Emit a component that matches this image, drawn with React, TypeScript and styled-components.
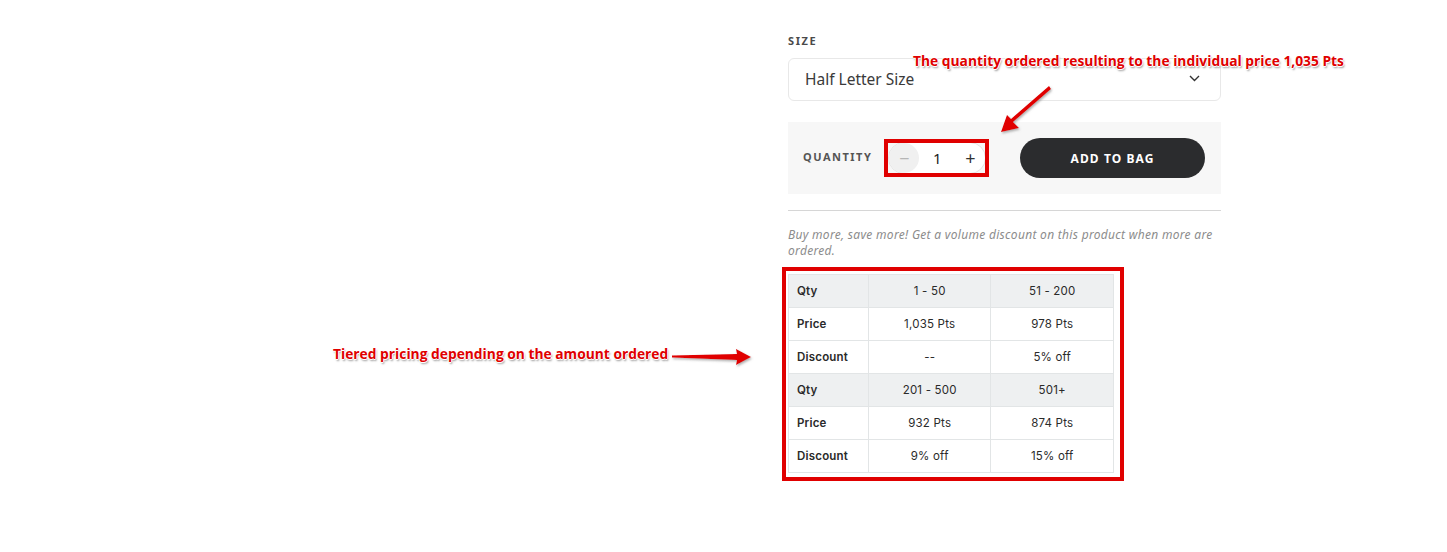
import React from "react";
import styled, { createGlobalStyle } from "styled-components";

const GlobalStyle = createGlobalStyle`
    html, body {
        margin: 0;
        padding: 0;
        background: #fff;
    }

    body {
        font-family: "Noto Sans", "Open Sans", sans-serif;
        color: #333;
    }
`;

const Page = styled.div`
    display: grid;
    grid-template-columns: 788px 433px;
    min-height: 552px;
    position: relative;
`;

const Gallery = styled.div``;

const ProductColumn = styled.div`
    display: flex;
    flex-direction: column;
    padding-top: 34px;
`;

const FieldLabel = styled.div`
    color: #4a4a4a;
    font-size: 11px;
    font-weight: 700;
    letter-spacing: 1.6px;
    line-height: 14px;
    text-transform: uppercase;
`;

const SelectBox = styled.div`
    align-items: center;
    border: 1px solid #e8e8e8;
    border-radius: 6px;
    box-sizing: border-box;
    color: #3a3a3a;
    display: flex;
    font-size: 15.5px;
    height: 43px;
    justify-content: space-between;
    margin-top: 10px;
    padding: 0 20px 2px 16px;
`;

const QuantityPanel = styled.div`
    align-items: center;
    background-color: #f7f7f7;
    box-sizing: border-box;
    display: flex;
    height: 72px;
    margin-top: 21px;
    padding: 0 16px 0 15px;
`;

const QuantityLabel = styled(FieldLabel)`
    color: #555;
    letter-spacing: 1.5px;
    margin-top: -2px;
`;

const Stepper = styled.div`
    align-items: center;
    background: #fff;
    border: 1px solid #e3e3e3;
    border-radius: 16px;
    box-sizing: border-box;
    display: flex;
    height: 32px;
    margin-left: 16px;
    position: relative;
    width: 98px;
`;

const StepButton = styled.div<{ $muted?: boolean }>`
    align-items: center;
    background: ${(p) => (p.$muted ? "#f0f0f0" : "transparent")};
    border-radius: 50%;
    color: ${(p) => (p.$muted ? "#b5b5b5" : "#333")};
    display: flex;
    font-size: 18px;
    height: 30px;
    justify-content: center;
    width: 30px;
`;

const StepValue = styled.div`
    color: #222;
    flex: 1;
    font-size: 15px;
    text-align: center;
`;

const Highlight = styled.div<{ $t: number; $r: number; $b: number; $l: number }>`
    border: 4px solid #e00000;
    inset: ${(p) => `-${p.$t}px -${p.$r}px -${p.$b}px -${p.$l}px`};
    pointer-events: none;
    position: absolute;
`;

const AddButton = styled.button`
    background-color: #2b2c2e;
    border: none;
    border-radius: 20px;
    color: #fff;
    font-family: "Noto Sans", sans-serif;
    font-size: 12px;
    font-weight: 700;
    height: 40px;
    letter-spacing: 1.1px;
    margin-left: auto;
    width: 185px;
`;

const Divider = styled.hr`
    border: none;
    border-top: 1px solid #d6d6d6;
    margin: 16px 0 0;
`;

const Note = styled.p`
    color: #8c8c8c;
    font-size: 12px;
    font-style: italic;
    letter-spacing: 0.3px;
    line-height: 16px;
    margin: 16px 0 0;
    max-width: 428px;
`;

const TableWrap = styled.div`
    align-self: flex-start;
    margin-top: 15px;
    position: relative;
`;

const PriceTable = styled.table`
    border-collapse: collapse;
    font-family: "Inter", "Liberation Sans", sans-serif;
    font-size: 11.5px;
    width: 326px;
`;

const Row = styled.tr<{ $head?: boolean }>`
    background: ${(p) => (p.$head ? "#eef0f1" : "#fff")};
    height: 33px;
`;

const Cell = styled.td<{ $label?: boolean }>`
    border: 1px solid #e2e5e6;
    box-sizing: border-box;
    color: #2a2a2a;
    font-weight: ${(p) => (p.$label ? 600 : 400)};
    letter-spacing: 0.2px;
    padding: 0 8px;
    text-align: ${(p) => (p.$label ? "left" : "center")};
    width: ${(p) => (p.$label ? "80px" : "123px")};
`;

const Callout = styled.div<{ $x: number; $y: number }>`
    color: #e00000;
    font-family: "Open Sans", "Noto Sans", sans-serif;
    font-size: 13.8px;
    font-weight: 700;
    left: ${(p) => p.$x}px;
    position: absolute;
    text-shadow: 1px 0 0 #fff, -1px 0 0 #fff, 0 1px 0 #fff, 0 -1px 0 #fff, 1px 2px 2px #9a9a9a;
    top: ${(p) => p.$y}px;
    white-space: nowrap;
`;

const ArrowLayer = styled.svg`
    left: 0;
    overflow: visible;
    pointer-events: none;
    position: absolute;
    top: 0;
`;

const Chevron = () => (
    <svg width="11" height="7" viewBox="0 0 11 7">
        <path d="M1 1l4.5 4.5L10 1" fill="none" stroke="#333" strokeWidth="1.4" />
    </svg>
);

const tiers = [
    [
        ["Qty", "1 - 50", "51 - 200"],
        ["Price", "1,035 Pts", "978 Pts"],
        ["Discount", "--", "5% off"],
    ],
    [
        ["Qty", "201 - 500", "501+"],
        ["Price", "932 Pts", "874 Pts"],
        ["Discount", "9% off", "15% off"],
    ],
];

const App: React.FC = () => {
    const rows = tiers.flat();

    return (
        <>
            <GlobalStyle />
            <Page>
                <Gallery />
                <ProductColumn>
                    <FieldLabel>Size</FieldLabel>
                    <SelectBox>
                        <span>Half Letter Size</span>
                        <Chevron />
                    </SelectBox>

                    <QuantityPanel>
                        <QuantityLabel>Quantity</QuantityLabel>
                        <Stepper>
                            <StepButton $muted>−</StepButton>
                            <StepValue>1</StepValue>
                            <StepButton>+</StepButton>
                            <Highlight $t={4} $r={4} $b={4} $l={5} />
                        </Stepper>
                        <AddButton>ADD TO BAG</AddButton>
                    </QuantityPanel>

                    <Divider />
                    <Note>
                        Buy more, save more! Get a volume discount on this product when more are ordered.
                    </Note>

                    <TableWrap>
                        <PriceTable>
                            <tbody>
                                {rows.map((row, i) => (
                                    <Row key={i} $head={row[0] === "Qty"}>
                                        <Cell $label>{row[0]}</Cell>
                                        <Cell>{row[1]}</Cell>
                                        <Cell>{row[2]}</Cell>
                                    </Row>
                                ))}
                            </tbody>
                        </PriceTable>
                        <Highlight $t={7} $r={10} $b={8} $l={6} />
                    </TableWrap>
                </ProductColumn>

                {/* annotation layer */}
                <Callout $x={913} $y={51}>
                    The quantity ordered resulting to the individual price 1,035 Pts
                </Callout>
                <Callout $x={333} $y={344}>
                    Tiered pricing depending on the amount ordered
                </Callout>
                <ArrowLayer width="1447" height="552">
                    <defs>
                        <filter id="shade" x="-20%" y="-20%" width="140%" height="140%">
                            <feDropShadow dx="1" dy="1.5" stdDeviation="1" floodColor="#777" floodOpacity="0.6" />
                        </filter>
                    </defs>
                    <g fill="#e00000" filter="url(#shade)">
                        <polygon points="1049,86 1051,89 1013,122 1019,128 1001,132 1007,115 1011,119" />
                        <polygon points="672,355.5 737,354 736,349 751,357 736,365 737,360 672,357.5" />
                    </g>
                </ArrowLayer>
            </Page>
        </>
    );
};

export default App;
